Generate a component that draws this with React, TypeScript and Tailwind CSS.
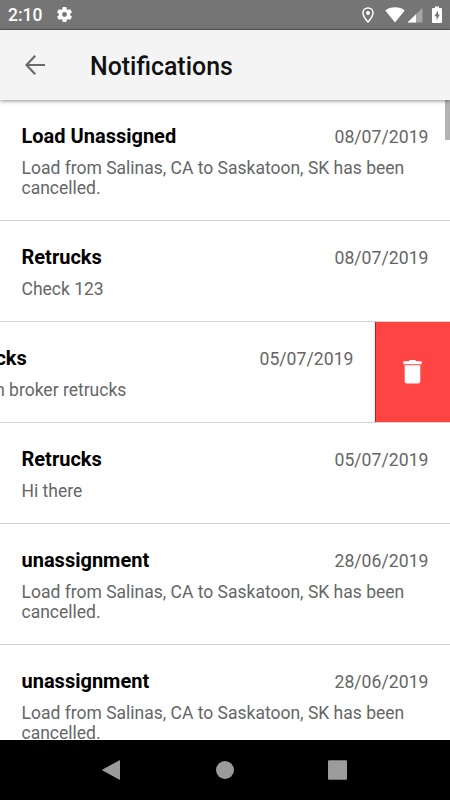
import clsx from "clsx";

interface Notification {
  id: number;
  title: string;
  date: string;
  message: string;
  swiped?: boolean;
}

const notifications: Notification[] = [
  {
    id: 1,
    title: "Load Unassigned",
    date: "08/07/2019",
    message: "Load from Salinas, CA to Saskatoon, SK has been cancelled.",
  },
  { id: 2, title: "Retrucks", date: "08/07/2019", message: "Check 123" },
  {
    id: 3,
    title: "Retrucks",
    date: "05/07/2019",
    message: "Hi from broker retrucks",
    swiped: true,
  },
  { id: 4, title: "Retrucks", date: "05/07/2019", message: "Hi there" },
  {
    id: 5,
    title: "unassignment",
    date: "28/06/2019",
    message: "Load from Salinas, CA to Saskatoon, SK has been cancelled.",
  },
  {
    id: 6,
    title: "unassignment",
    date: "28/06/2019",
    message: "Load from Salinas, CA to Saskatoon, SK has been cancelled.",
  },
];

const StatusBar: React.FC = () => (
  <div className="flex h-[30px] shrink-0 items-center border-b border-[#5c5c5c] bg-[#757575] px-2 text-white">
    <span className="w-[35px] pt-[3px] text-[17.5px] leading-none font-medium">2:10</span>
    <svg className="ml-[12px] size-[19px]" viewBox="0 0 24 24" fill="currentColor">
      <path d="M19.14 12.94c.04-.3.06-.61.06-.94s-.02-.64-.07-.94l2.03-1.58a.49.49 0 0 0 .12-.61l-1.92-3.32a.49.49 0 0 0-.59-.22l-2.39.96a7 7 0 0 0-1.62-.94l-.36-2.54a.48.48 0 0 0-.48-.41h-3.84a.48.48 0 0 0-.47.41l-.36 2.54c-.59.24-1.13.57-1.62.94l-2.39-.96a.48.48 0 0 0-.59.22L2.74 8.87a.48.48 0 0 0 .12.61l2.03 1.58a7.5 7.5 0 0 0 0 1.88l-2.03 1.58a.49.49 0 0 0-.12.61l1.92 3.32c.12.22.37.29.59.22l2.39-.96c.5.38 1.03.7 1.62.94l.36 2.54c.05.24.24.41.48.41h3.84c.24 0 .44-.17.47-.41l.36-2.54a7 7 0 0 0 1.62-.94l2.39.96c.22.08.47 0 .59-.22l1.92-3.32a.48.48 0 0 0-.12-.61zM12 15.1a3.1 3.1 0 1 1 0-6.2 3.1 3.1 0 0 1 0 6.2z" />
    </svg>
    <div className="ml-auto flex items-center">
      {/* Location */}
      <svg className="mr-[11px] h-[16px] w-[12px]" viewBox="0 0 12 16" fill="none">
        <path
          d="M6 .9C3.200.9 1 3.100 1 5.900 1 9.300 6 14.900 6 14.900s5-5.600 5-9C11 3.100 8.800.9 6 .9z"
          stroke="currentColor"
          strokeWidth="1.5"
        />
        <circle cx="6" cy="6" r="2" fill="currentColor" />
      </svg>
      {/* Wi-Fi */}
      <svg className="mr-[2px] h-[16px] w-[20px]" viewBox="0 0 20 16" fill="currentColor">
        <path d="M.3 3.400C2.800 1.400 6.100.3 10 .3s7.200 1.100 9.700 3.100L10 15.600z" />
      </svg>
      {/* Mobile signal */}
      <svg className="mr-[9px] h-[16px] w-[16px]" viewBox="0 0 16 16" fill="currentColor">
        <path d="M.5 15.500 15.500 1v14.500z" opacity=".35" />
        <path d="M.5 15.500 9 7.300v8.200z" />
      </svg>
      {/* Charging battery */}
      <svg className="h-[17px] w-[10px]" viewBox="0 0 10 17">
        <path
          d="M1 2h2V.5h4V2h2q1 0 1 1v13q0 1-1 1H1q-1 0-1-1V3q0-1 1-1z"
          fill="currentColor"
        />
        <path d="M6 4.500 2.300 10.200h2.200v4L7.900 8.600H6z" fill="#757575" />
      </svg>
    </div>
  </div>
);

const Header: React.FC = () => (
  <header className="relative z-10 flex h-[70px] shrink-0 items-center bg-[#f4f4f4] pl-[25px] shadow-[0_1px_4px_rgba(0,0,0,0.45)]">
    <svg className="size-[20px]" viewBox="0 0 20 20" fill="none" stroke="#6b6b6b" strokeWidth="2.2">
      <path d="M20 10H2M10.200 .8 1.500 10l8.700 9.200" />
    </svg>
    <h1 className="ml-[45px] pt-[3px] text-[24.9px] leading-[30px] font-medium text-[#111]">
      Notifications
    </h1>
  </header>
);

const DeleteAction: React.FC = () => (
  <button
    aria-label="Delete"
    className="flex w-[75px] shrink-0 items-center justify-center border-l border-[#f00] bg-[#ff4444] pr-px text-white"
  >
    <svg className="h-[24px] w-[19px]" viewBox="0 0 19 24" fill="currentColor">
      <path d="M.4 1.300h5.400L6.800 0h5.400l1 1.300h5.400v2.900H.4z" />
      <path d="M1.700 5.200h15.600v16q0 2.300-2.200 2.300H3.900q-2.200 0-2.200-2.300z" />
    </svg>
  </button>
);

const NotificationRow: React.FC<{ item: Notification }> = ({ item }) => (
  <li
    className={clsx(
      "flex overflow-hidden border-b border-[#d3d3d3]",
      item.swiped && "justify-end"
    )}
  >
    <div className="w-[450px] shrink-0 px-[21.5px] pt-6 pb-[22px]">
      <div className="flex h-[24px] items-baseline justify-between">
        <h2 className="text-[20px] leading-[24px] font-bold text-black">{item.title}</h2>
        <span className="text-[17.6px] leading-[24px] tracking-[0.04px] text-[#666]">
          {item.date}
        </span>
      </div>
      <p className="mt-[10px] text-[17.5px] leading-[20px] text-[#666]">{item.message}</p>
    </div>
    {item.swiped && <DeleteAction />}
  </li>
);

const NavigationBar: React.FC = () => (
  <nav className="flex h-[60px] shrink-0 items-center justify-center gap-[93px] bg-black text-[#9b9b9b]">
    <svg className="size-[20px]" viewBox="0 0 20 20" fill="currentColor">
      <path d="M17.500.2Q18 0 18 .6v18.800q0 .6-.5.400L.6 10.500q-.8-.5 0-1z" />
    </svg>
    <svg className="size-[20px]" viewBox="0 0 20 20" fill="currentColor">
      <circle cx="10" cy="10" r="9" />
    </svg>
    <svg className="size-[20px]" viewBox="0 0 20 20" fill="currentColor">
      <rect x="0" y=".3" width="19" height="19.4" rx="1" />
    </svg>
  </nav>
);

const App: React.FC = () => {
  return (
    <div className="flex h-[800px] w-[450px] flex-col overflow-hidden bg-white font-['Roboto',sans-serif]">
      <StatusBar />
      <Header />
      <main className="relative min-h-0 flex-1 overflow-hidden">
        <ul>
          {notifications.map((item) => (
            <NotificationRow key={item.id} item={item} />
          ))}
        </ul>
        {/* Scroll indicator */}
        <div className="absolute top-0 right-0 h-[40px] w-[5px] bg-[#b3b3b3]" />
      </main>
      <NavigationBar />
    </div>
  );
};

export default App;
